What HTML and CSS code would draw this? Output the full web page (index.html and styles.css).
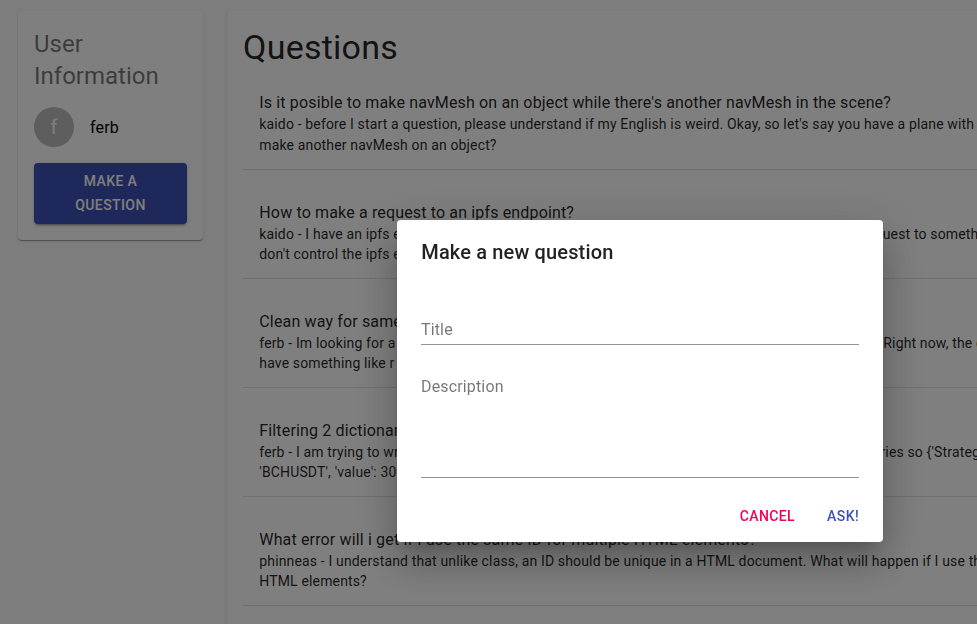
FILE: index.html
```html
<!DOCTYPE html>
<html lang="en">
<head>
<meta charset="utf-8">
<title>Questions</title>
<link rel="stylesheet" href="styles.css">
</head>
<body>
<div class="layout">
  <aside class="paper user-card">
    <h2 class="card-title">User Information</h2>
    <div class="user"><span class="avatar">f</span><span class="name">ferb</span></div>
    <button class="primary">Make a question</button>
  </aside>
  <main class="paper questions">
    <h1>Questions</h1>
    <ul>
      <li><h3>Is it posible to make navMesh on an object while there's another navMesh in the scene?</h3>
        <p>kaido - before I start a question, please understand if my English is weird. Okay, so let's say you have a plane with<br>make another navMesh on an object?</p></li>
      <li><h3>How to make a request to an ipfs endpoint?</h3>
        <p><span class="lead lead-ipfs">kaido - I have an ipfs e</span>request to something<br>don't control the ipfs e</p></li>
      <li><h3>Clean way for same</h3>
        <p><span class="lead lead-clean">ferb - Im looking for a</span>Right now, the code<br>have something like r</p></li>
      <li><h3>Filtering 2 dictionar</h3>
        <p><span class="lead lead-filter">ferb - I am trying to wr</span>dictionaries so {'Strategy'<br>'BCHUSDT', 'value': 30</p></li>
      <li><h3>What error will i get if I use the same ID for multiple HTML elements?</h3>
        <p>phinneas - I understand that unlike class, an ID should be unique in a HTML document. What will happen if I use the<br>HTML elements?</p></li>
    </ul>
  </main>
</div>
<div class="backdrop">
  <form class="dialog">
    <h2 class="dialog-title">Make a new question</h2>
    <div class="fields">
      <input class="title-field" placeholder="Title" aria-label="Title">
      <textarea class="description-field" placeholder="Description" aria-label="Description"></textarea>
    </div>
    <div class="actions">
      <button type="button" class="cancel">Cancel</button>
      <button type="button" class="ask">Ask!</button>
    </div>
  </form>
</div>
</body>
</html>
```
FILE: styles.css
```css
* { box-sizing: border-box; }
html, body { height: 100%; }
body {
  margin: 0;
  overflow: hidden;
  background: #fafafa;
  color: rgba(0, 0, 0, .87);
  font-family: Roboto, sans-serif;
}
h1, h2, h3, p, ul { margin: 0; padding: 0; font-weight: 400; }
button { border: 0; font: 500 14px/24.5px Roboto, sans-serif; letter-spacing: .4px; text-transform: uppercase; }
.layout {
  display: flex;
  align-items: flex-start;
  gap: 24px;
  width: 1260px;
  height: 100%;
  overflow: hidden;
  padding: 11px 0 0 18px;
}
.paper {
  padding: 16px;
  background: #fff;
  border-radius: 4px;
  box-shadow: 0 2px 1px -1px rgba(0,0,0,.2), 0 1px 1px rgba(0,0,0,.14), 0 1px 3px rgba(0,0,0,.12);
}
.user-card { width: 185px; flex: none; padding-top: 17px; }
.card-title { font-size: 24px; line-height: 32px; color: rgba(0, 0, 0, .54); }
.user { display: flex; align-items: center; gap: 16px; padding: 15px 0 16px; color: #000; }
.avatar {
  display: flex;
  align-items: center;
  justify-content: center;
  width: 40px;
  height: 40px;
  border-radius: 50%;
  background: #bdbdbd;
  color: #fafafa;
  font-size: 20px;
}
.name { padding-top: 2px; font-size: 16px; line-height: 24px; letter-spacing: .15px; }
.primary {
  display: block;
  width: 100%;
  padding: 6px 16px 7px;
  border-radius: 4px;
  background: #3f51b5;
  color: #fff;
  line-height: 24px;
  box-shadow: 0 3px 1px -2px rgba(0,0,0,.2), 0 2px 2px rgba(0,0,0,.14), 0 1px 5px rgba(0,0,0,.12);
}
.questions { flex: 1; align-self: stretch; padding-top: 15px; border-radius: 4px 4px 0 0; }
h1 { font-size: 34px; line-height: 42px; letter-spacing: .25px; }
.questions ul { list-style: none; padding-top: 9px; }
.questions li {
  margin-bottom: 16px;
  padding: 15px 16px 14px 16.3px;
  border-bottom: 1px solid rgba(0, 0, 0, .12);
  white-space: nowrap;
}
.questions h3 { font-size: 16px; line-height: 24px; letter-spacing: .15px; }
.questions p { margin-top: -1px; font-size: 14px; line-height: 20px; letter-spacing: .15px; }
.questions li:first-child { padding-top: 14px; padding-bottom: 13px; }
.questions li:first-child p { line-height: 21px; }
.lead { display: inline-block; vertical-align: top; }
.lead-ipfs { width: 603px; }
.lead-clean { width: 624px; }
.lead-filter { width: 570px; }
.backdrop { position: fixed; inset: 0; background: rgba(0, 0, 0, .5); }
.dialog {
  position: absolute;
  left: 397px;
  top: 220px;
  width: 486px;
  height: 322px;
  display: flex;
  flex-direction: column;
  background: #fff;
  border-radius: 4px;
  box-shadow: 0 11px 15px -7px rgba(0,0,0,.2), 0 24px 38px 3px rgba(0,0,0,.14), 0 9px 46px 8px rgba(0,0,0,.12);
}
.dialog-title { padding: 16px 24px 16px 24.3px; font-size: 20px; line-height: 32px; font-weight: 500; letter-spacing: .15px; }
.fields { flex: 1; display: flex; flex-direction: column; gap: 24px; padding: 29px 24px 0; }
.fields input, .fields textarea {
  width: 100%;
  padding: 8px 0 4px;
  border: 0;
  border-bottom: 1px solid rgba(0, 0, 0, .42);
  border-radius: 0;
  outline: 0;
  resize: none;
  overflow: hidden;
  font: 400 16px/19px Roboto, sans-serif;
  letter-spacing: .15px;
}
.fields input { height: 32px; padding: 7px 0 5px; }
.fields textarea { height: 109px; }
.fields ::placeholder { color: rgba(0, 0, 0, .54); opacity: 1; }
.actions { display: flex; justify-content: flex-end; gap: 32px; padding: 0 24px 8px; }
.actions button { padding: 6px 0; background: none; }
.cancel { color: #f50057; }
.ask { color: #3f51b5; }
```
